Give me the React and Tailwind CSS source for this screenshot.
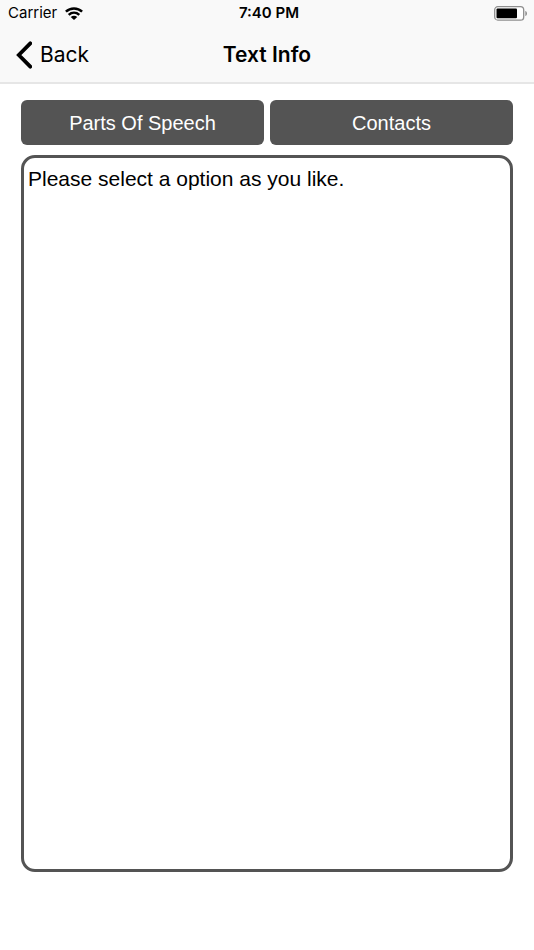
const StatusBar = () => (
  <div className="grid grid-cols-3 items-center h-[27px] pl-2 pr-1 text-[15px]">
    <div className="flex items-center gap-2">
      <span>Carrier</span>
      <svg className="w-[18px] h-[13px]" viewBox="0 0 18 13" aria-hidden="true">
        <g fill="none" stroke="#000" strokeWidth="2.5">
          <path d="M0.9 4.7C5.4 0.4 12.6 0.4 17.1 4.7" />
          <path d="M3.7 7.9C6.8 5.1 11.2 5.1 14.3 7.9" />
        </g>
        <path d="M5.7 9.9C7.7 8.2 10.3 8.2 12.3 9.9L9 13Z" />
      </svg>
    </div>
    <span className="text-center font-semibold">7:40 PM</span>
    <svg className="w-9 h-[15px] justify-self-end" viewBox="0 0 36 15" aria-hidden="true">
      <rect x="0.7" y="0.7" width="29" height="13.4" rx="3.2" fill="#fff" stroke="#8e8e8e" strokeWidth="1.3" />
      <rect x="2.5" y="2.5" width="20.5" height="9.8" rx="1" />
      <path d="M31.3 5C33.6 5.4 33.6 9.6 31.3 10Z" fill="#8e8e8e" />
    </svg>
  </div>
);

const NavBar = () => (
  <nav className="grid grid-cols-3 items-center h-[55px] px-4 text-[21px]">
    <a href="#back" className="flex items-center gap-2">
      <svg className="w-4 h-7" viewBox="0 0 16 28" aria-hidden="true">
        <path
          d="M14.3 2.3L2.8 14L14.3 25.7"
          fill="none"
          stroke="#000"
          strokeWidth="3.8"
          strokeLinecap="round"
        />
      </svg>
      Back
    </a>
    <h1 className="text-center font-semibold whitespace-nowrap">Text Info</h1>
  </nav>
);

const OptionButton = ({ children }) => (
  <button
    type="button"
    className="flex-1 h-[45px] rounded-md bg-[#545454] text-white text-xl"
  >
    {children}
  </button>
);

const App = () => {
  return (
    <div className="min-h-screen flex flex-col bg-white text-black font-['Inter',sans-serif]">
      <header className="bg-[#f9f9f9] border-b-2 border-[#e6e6e6]">
        <StatusBar />
        <NavBar />
      </header>

      <main className="flex-1 flex flex-col px-[21px] pt-4 pb-[78px] font-['Liberation_Sans',Arial,sans-serif]">
        <div className="flex gap-[6px] mb-[10px]">
          <OptionButton>Parts Of Speech</OptionButton>
          <OptionButton>Contacts</OptionButton>
        </div>
        <textarea
          readOnly
          aria-label="Result"
          defaultValue="Please select a option as you like."
          className="flex-1 w-full resize-none outline-none rounded-[14px] border-[3px] border-[#545454] px-1 py-2 text-[21px] leading-[26px]"
        />
      </main>
    </div>
  );
};

export default App;
